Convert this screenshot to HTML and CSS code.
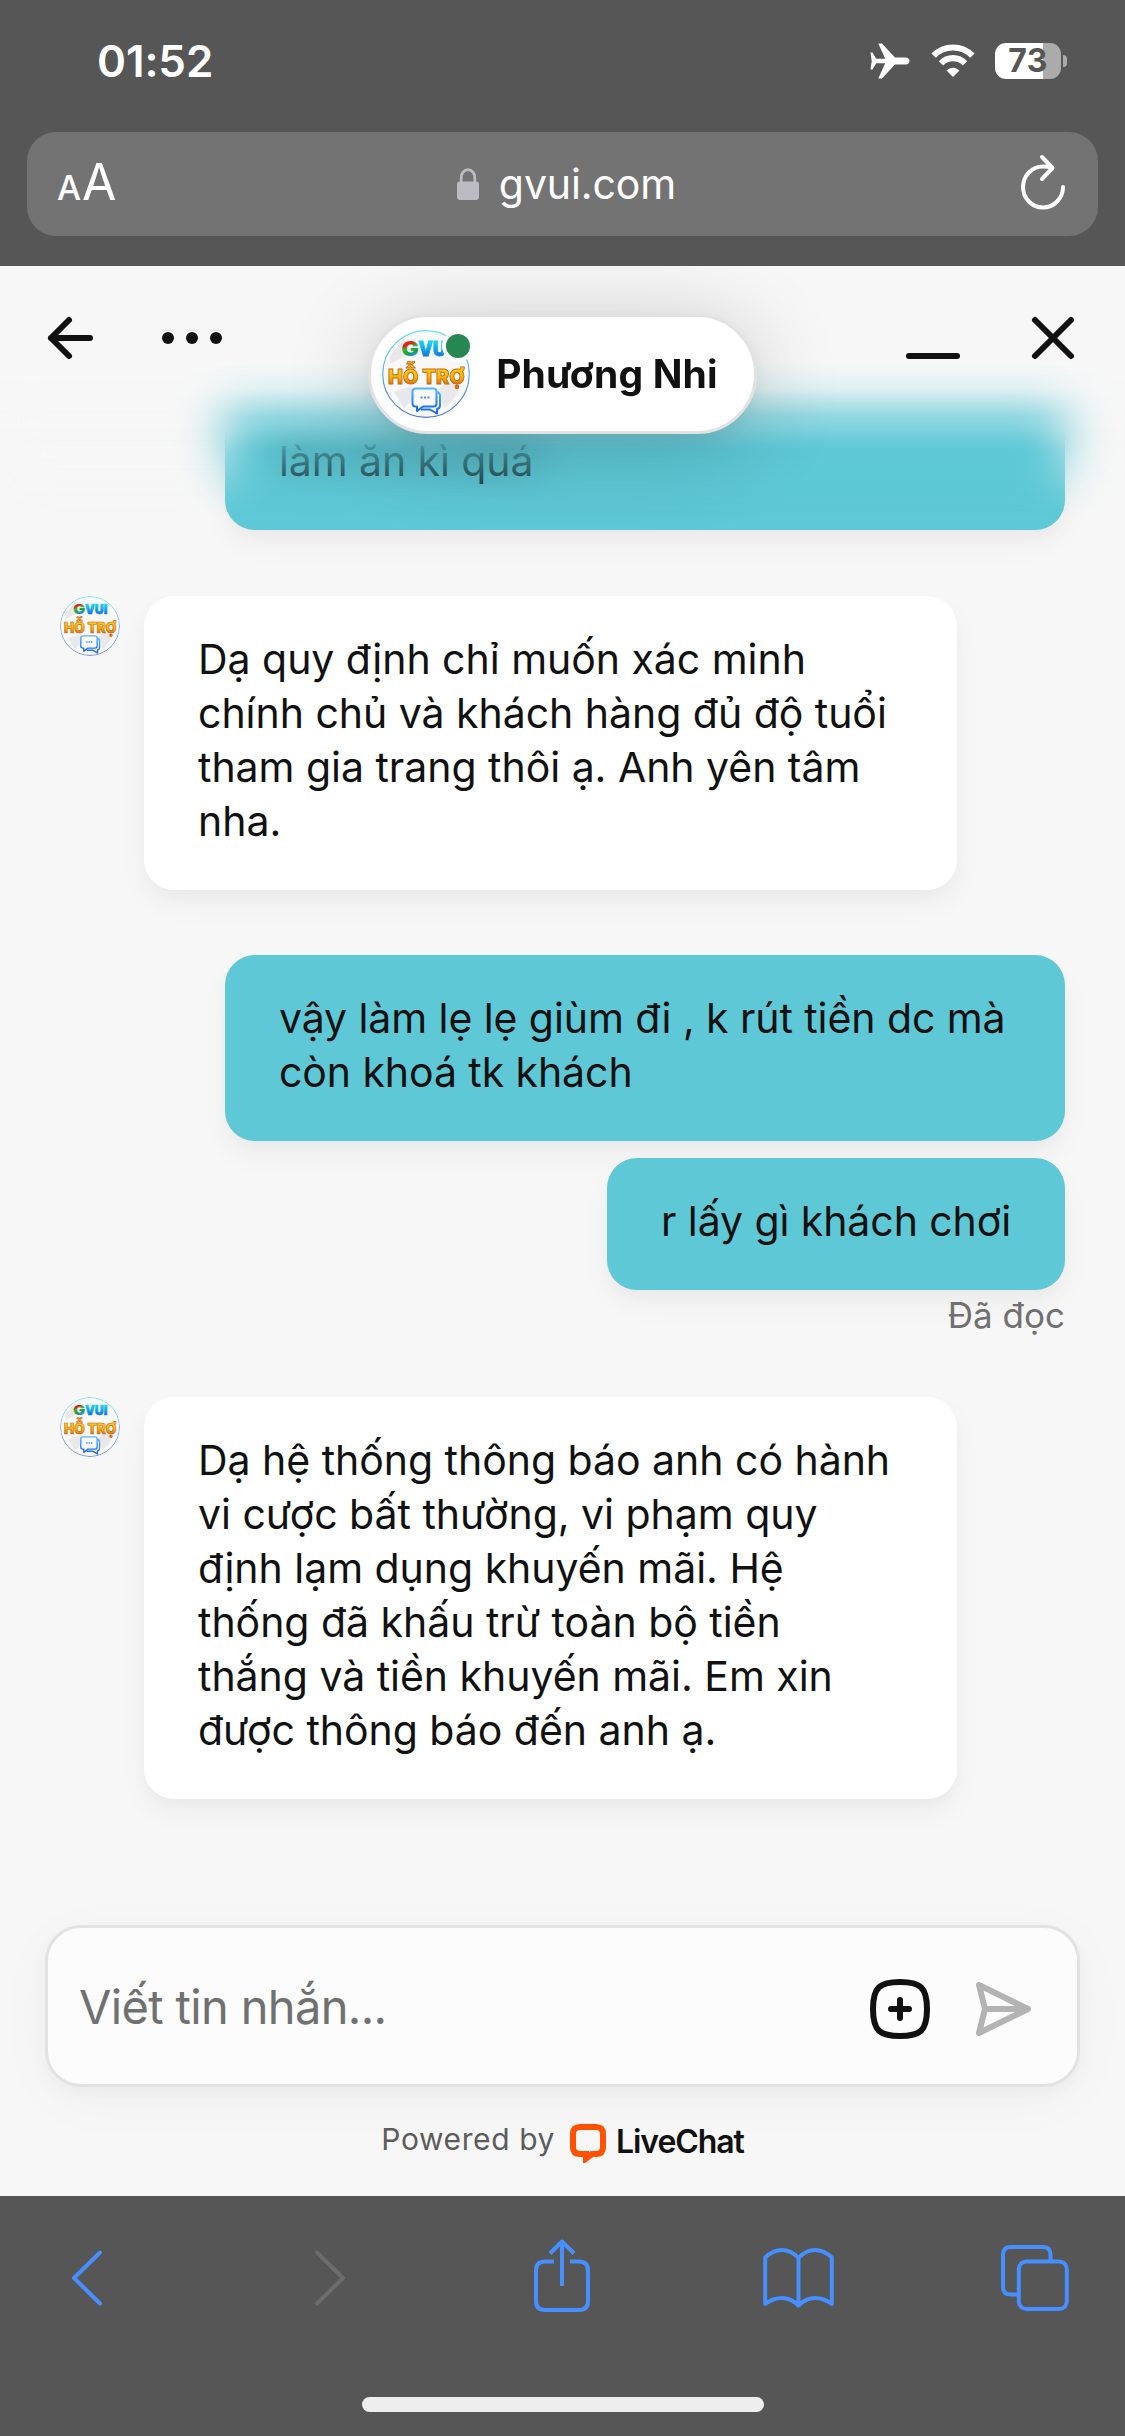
FILE: index.html
```html
<!DOCTYPE html>
<html lang="vi">
<head>
<meta charset="utf-8">
<title>gvui.com</title>
<link rel="stylesheet" href="styles.css">
</head>
<body>
<svg class="defs" width="0" height="0" aria-hidden="true">
  <defs>
    <linearGradient id="gold" x1="0" y1="0" x2="0" y2="1"><stop offset="0.2" stop-color="#ffd21c"/><stop offset="0.6" stop-color="#f8b406"/><stop offset="0.85" stop-color="#d9720c"/></linearGradient>
    <linearGradient id="sky" x1="0" y1="0" x2="0" y2="1"><stop offset="0.2" stop-color="#15d3f6"/><stop offset="0.85" stop-color="#1272dc"/></linearGradient>
    <linearGradient id="multi" x1="0" y1="0" x2="0.3" y2="1"><stop offset="0.4" stop-color="#e02418"/><stop offset="0.52" stop-color="#2fb82c"/><stop offset="0.75" stop-color="#16a03c"/><stop offset="0.85" stop-color="#1d8fe0"/></linearGradient>
    <linearGradient id="ring" x1="0" y1="0" x2="0" y2="1"><stop offset="0" stop-color="#62e6f5"/><stop offset="1" stop-color="#5675c9"/></linearGradient>
    <linearGradient id="chat" x1="0" y1="0" x2="0" y2="1"><stop offset="0" stop-color="#55b5ff"/><stop offset="1" stop-color="#1463f0"/></linearGradient>
    <symbol id="avatar" viewBox="0 0 88 88">
      <circle cx="44" cy="44" r="43.3" fill="#f8f8f9" stroke="url(#ring)" stroke-width="1.2"/>
      <path d="M8 26 22 8q8 6 3 17L8 34ZM12 62 28 56l6 10-12 12ZM56 60q8-10 22-6-4 16-16 24Z" fill="#e8e8ea"/>
      <text x="19.5" y="26" class="logo-top" fill="url(#multi)" textLength="17.5" lengthAdjust="spacingAndGlyphs">G</text>
      <text x="36.5" y="26" class="logo-top" fill="url(#sky)" stroke="url(#sky)" stroke-width="0.8" textLength="33" lengthAdjust="spacingAndGlyphs">VUI</text>
      <text x="6" y="53.6" class="logo-main" fill="url(#gold)" stroke="#c4661a" stroke-width="0.9" textLength="77" lengthAdjust="spacingAndGlyphs">HỖ TRỢ</text>
      <g fill="none" stroke="url(#chat)" stroke-width="2" stroke-linejoin="round">
        <path d="M33.500 58.500h18q3 0 3 3v12q0 3-3 3H41l-6 4.500v-4.500h-1.500q-3 0-3-3v-12q0-3 3-3Z"/>
        <path d="M54.500 62q3.500.500 3.500 4v9q0 3.500-3 4v4.500L48 79.500h-9"/>
      </g>
      <path d="M38.500 67.500h2M42 67.500h2M45.500 67.500h2" stroke="#4c8df5" stroke-width="2"/>
    </symbol>
  </defs>
</svg>

<div class="phone">
  <header class="browser">
    <div class="status">
      <span class="clock">01:52</span>
      <div class="indicators">
        <svg class="plane" width="40" height="36" viewBox="0 0 40 36" fill="#fff"><path d="M0.500 9.500h2L6.200 15.800h9L8.300 0.500h3.600L25 14.400h10.500c5.400 0 5.400 7.200 0 7.200H25L11.900 35.500H8.300l6.900-15.300h-9L2.500 26.500h-2l1.200-8.500Z"/></svg>
        <svg class="wifi" width="44" height="34" viewBox="0 0 44 34"><g fill="none" stroke="#fff" stroke-width="6.200"><path d="M2.600 11.700a27 27 0 0 1 38.800 0"/><path d="M10 19.300a16.700 16.700 0 0 1 24 0"/></g><path d="M22 33l-6.500-6.600a9.200 9.200 0 0 1 13 0Z" fill="#fff"/></svg>
        <div class="battery"><span class="level">73</span></div>
        <span class="nub"></span>
      </div>
    </div>
    <div class="address">
      <div class="reader"><span class="small-a">A</span><span class="big-a">A</span></div>
      <div class="site">
        <svg width="22" height="32" viewBox="0 0 22 32"><path d="M4.200 15V9.500a6.800 7.800 0 0 1 13.600 0V15" fill="none" stroke="#bcbbc2" stroke-width="2.800"/><rect y="13.500" width="22" height="18.500" rx="3" fill="#bcbbc2"/></svg>
        <span>gvui.com</span>
      </div>
      <svg class="reload" width="48" height="56" viewBox="0 0 48 56" fill="none" stroke="#fff" stroke-width="4" stroke-linecap="round" stroke-linejoin="round"><path d="M44 33a20 20.500 0 1 1-20-20.500q5 0 9 1"/><path d="M23 3l10.500 11L23 25"/></svg>
    </div>
  </header>

  <main class="chat">
    <section class="thread">
      <div class="bubble mine first">làm ăn kì quá</div>
      <div class="agent-row">
        <svg class="avatar" width="60" height="60"><use href="#avatar"/></svg>
        <div class="bubble agent">Dạ quy định chỉ muốn xác minh<br>chính chủ và khách hàng đủ độ tuổi<br>tham gia trang thôi ạ. Anh yên tâm<br>nha.</div>
      </div>
      <div class="mine-group">
        <div class="bubble mine wide">vậy làm lẹ lẹ giùm đi , k rút tiền dc mà<br>còn khoá tk khách</div>
        <div class="bubble mine">r lấy gì khách chơi</div>
        <span class="seen">Đã đọc</span>
      </div>
      <div class="agent-row">
        <svg class="avatar" width="60" height="60"><use href="#avatar"/></svg>
        <div class="bubble agent">Dạ hệ thống thông báo anh có hành<br>vi cược bất thường, vi phạm quy<br>định lạm dụng khuyến mãi. Hệ<br>thống đã khấu trừ toàn bộ tiền<br>thắng và tiền khuyến mãi. Em xin<br>được thông báo đến anh ạ.</div>
      </div>
    </section>

    <footer class="foot">
      <div class="composer">
        <span class="placeholder">Viết tin nhắn...</span>
        <svg class="attach" width="60" height="60" viewBox="0 0 60 60" fill="none" stroke="#111" stroke-width="6" stroke-linecap="round"><path d="M30 3c20 0 27 5 27 27s-7 27-27 27S3 52 3 30 10 3 30 3Z"/><path d="M30 21v18M21 30h18"/></svg>
        <svg class="send" width="60" height="60" viewBox="0 0 60 60" fill="none" stroke="#b3b3b3" stroke-width="6" stroke-linecap="round" stroke-linejoin="round"><path d="M5 6l49 24L5 54l6-24ZM11 30h42"/></svg>
      </div>
      <div class="powered">
        <span class="by">Powered by</span>
        <svg width="36" height="39" viewBox="0 0 36 39"><path d="M10 3h16q7 0 7 7v13q0 7-7 7h-4l-6 4.500V30h-6q-7 0-7-7V10q0-7 7-7Z" fill="none" stroke="#ff5100" stroke-width="6"/></svg>
        <span class="brand">LiveChat</span>
      </div>
    </footer>

    <div class="veil"></div>
    <div class="chat-header">
      <div class="side">
        <svg width="48" height="48" viewBox="0 0 48 48" fill="none" stroke="#111" stroke-width="6" stroke-linecap="round" stroke-linejoin="round"><path d="M45 24H6M24 6L6 24l18 18"/></svg>
        <svg class="dots" width="60" height="48" viewBox="0 0 60 48" fill="#111"><circle cx="6" cy="24" r="6"/><circle cx="30" cy="24" r="6"/><circle cx="54" cy="24" r="6"/></svg>
      </div>
      <div class="person">
        <div class="portrait">
          <svg width="88" height="88"><use href="#avatar"/></svg>
          <span class="online"></span>
        </div>
        <span class="name">Phương Nhi</span>
      </div>
      <div class="side right">
        <svg width="60" height="48" viewBox="0 0 60 48" fill="none" stroke="#111" stroke-width="6" stroke-linecap="round"><path d="M6 42h48"/></svg>
        <svg class="close" width="48" height="48" viewBox="0 0 48 48" fill="none" stroke="#111" stroke-width="6" stroke-linecap="round"><path d="M6 6l36 36M42 6L6 42"/></svg>
      </div>
    </div>
  </main>

  <nav class="toolbar">
    <div class="tools">
      <svg class="back" width="31" height="56" viewBox="0 0 31 56"><path d="M29 2.500L3 28l26 25.500"/></svg>
      <svg class="forward" width="31" height="56" viewBox="0 0 31 56"><path d="M2 2.500L28 28 2 53.500"/></svg>
      <svg class="share" width="58" height="74" viewBox="0 0 58 74"><path d="M21 22.500h-9q-9 0-9 9V62q0 9 9 9h34q9 0 9-9V31.500q0-9-9-9h-9"/><path d="M29 47V3M17 14.500L29 2.500l12 12"/></svg>
      <svg class="book" width="71" height="60" viewBox="0 0 71 60"><path d="M35.500 10Q28 2 19 2T2.200 9.500V56Q10 50 19 50t16.500 7.500ZM35.500 10Q43 2 52 2t16.800 7.500V56Q61 50 52 50t-16.500 7.500"/></svg>
      <svg class="tabs" width="68" height="66" viewBox="0 0 68 66"><path d="M49.500 15V9.500q0-7.500-7.500-7.500H9.500Q2 2 2 9.500V42q0 7.500 7.500 7.500H17"/><rect x="17.800" y="16.500" width="48" height="47.500" rx="7.500"/></svg>
    </div>
    <div class="home"></div>
  </nav>
</div>
</body>
</html>
```
FILE: styles.css
```css
* { box-sizing: border-box; }
body { margin: 0; font-family: Inter, "Liberation Sans", sans-serif; color: #111; }
svg { display: block; flex: none; }
.defs { position: absolute; }
.phone { width: 1125px; height: 2436px; display: flex; flex-direction: column; background: #565656; overflow: hidden; }

/* Browser chrome */
.browser { height: 266px; padding: 0 27px; color: #fff; }
.status { height: 122px; display: flex; align-items: center; justify-content: space-between; padding: 0 31px 0 70px; }
.clock { font-size: 44px; font-weight: 600; letter-spacing: -0.1px; }
.indicators { display: flex; align-items: center; }
.wifi { margin: 0 20px 0 21px; }
.battery { width: 66px; height: 36px; border-radius: 11px; background: linear-gradient(90deg, #fff 48px, #ababab 48px); display: flex; align-items: center; justify-content: center; }
.level { font-size: 32px; font-weight: 700; line-height: 36px; color: #565656; letter-spacing: 0.5px; }
.nub { width: 4px; height: 12px; margin-left: 2px; border-radius: 0 4px 4px 0; background: #ababab; }
.address { height: 104px; margin-top: 10px; padding: 0 31px 0 30px; border-radius: 29px; background: #737373; display: grid; grid-template-columns: 1fr auto 1fr; align-items: center; }
.reader { display: flex; align-items: baseline; gap: 1px; line-height: 60px; padding-top: 2px; }
.small-a { font-size: 34px; font-weight: 500; }
.big-a { font-size: 50px; }
.site { display: flex; align-items: center; gap: 20px; font-size: 41px; letter-spacing: -0.1px; margin-left: 9px; }
.site span { margin-top: -1px; }
.reload { justify-self: end; margin-top: -4px; }

/* Chat window */
.chat { position: relative; height: 1930px; background: #f7f7f7; display: flex; flex-direction: column; overflow: hidden; }
.thread { padding: 78px 60px 0; display: flex; flex-direction: column; gap: 65px; }
.bubble { padding: 36px 54px 42px; border-radius: 30px; font-size: 41px; line-height: 54px; letter-spacing: -0.08px; white-space: nowrap; box-shadow: 0 6px 12px rgba(0, 0, 0, 0.02), 0 14px 28px rgba(0, 0, 0, 0.045); }
.mine { background: #5ec8d6; align-self: flex-end; }
.wide { width: 840px; }
.first { width: 840px; padding-top: 90px; margin-bottom: 1px; }
.agent { background: #fff; width: 813px; letter-spacing: -0.03px; }
.agent-row { display: flex; align-items: flex-start; gap: 24px; }
.avatar { border-radius: 50%; }
.mine-group { display: flex; flex-direction: column; align-items: flex-end; gap: 17px; height: 377px; }
.seen { margin-top: -13px; font-size: 35px; line-height: 42px; color: #707070; }
.logo-top { font: 900 20px Inter, sans-serif; }
.logo-main { font: 900 20.500px Inter, sans-serif; }

.foot { margin-top: auto; padding: 0 45px 25px; }
.composer { height: 162px; padding: 0 43px 0 31px; border: 3px solid #e2e2e2; border-radius: 36px; background: #fcfcfc; display: flex; align-items: center; box-shadow: 0 6px 18px rgba(0, 0, 0, 0.035), 0 12px 60px rgba(0, 0, 0, 0.03); }
.placeholder { flex: 1; font-size: 47px; letter-spacing: -0.65px; color: #707070; }
.attach { margin-top: 6px; }
.send { margin: 6px 0 0 44px; }
.powered { height: 60px; margin-top: 24px; display: flex; align-items: center; justify-content: center; }
.by { font-size: 30px; letter-spacing: 0.6px; color: #5c5c5c; margin-top: -4px; margin-right: 15px; }
.brand { font-size: 32px; font-weight: 600; letter-spacing: -1.100px; margin-left: 10px; }
.powered svg { margin-top: 5px; }

/* Frosted header lying over the scrolled thread */
.veil { position: absolute; inset: 0 0 auto; height: 250px; background: linear-gradient(#f7f7f7 95px, rgba(247, 247, 247, 0.850) 122px, rgba(247, 247, 247, 0.350) 150px, rgba(247, 247, 247, 0) 185px); backdrop-filter: blur(24px); -webkit-mask-image: linear-gradient(#000 165px, transparent 250px); mask-image: linear-gradient(#000 165px, transparent 250px); }
.chat-header { position: absolute; inset: 0 0 auto; padding: 48px 45px 0; display: grid; grid-template-columns: 1fr auto 1fr; align-items: start; }
.side { display: flex; }
.right { justify-content: flex-end; }
.dots { margin-left: 69px; }
.close { margin: 0 3px 0 66px; }
.person { height: 120px; padding: 0 36px 0 11px; border: 3px solid #e2e2e2; border-radius: 60px; background: #fff; display: flex; align-items: center; gap: 26px; box-shadow: 0 6px 18px rgba(0, 0, 0, 0.06), 0 12px 90px rgba(0, 0, 0, 0.2); }
.portrait { position: relative; }
.online { position: absolute; left: 60px; top: 0; width: 32px; height: 32px; border: 4px solid #fff; border-radius: 50%; background: #268750; }
.name { font-size: 39px; font-weight: 700; letter-spacing: 0.2px; margin-top: -2px; }

/* Browser toolbar */
.toolbar { height: 240px; display: flex; flex-direction: column; align-items: center; }
.tools { width: 100%; height: 201px; padding: 0 56px 37px 71px; display: flex; align-items: center; }
.tools svg { fill: none; stroke: #458fff; stroke-width: 4; stroke-linecap: round; stroke-linejoin: round; }
.tools .forward { margin-left: 213px; stroke: #6c6c6c; }
.tools .share { margin: -4px 0 0 187px; stroke-linecap: butt; }
.book { margin-left: 172px; }
.tabs { margin-left: 167px; }
.home { width: 402px; height: 15px; border-radius: 8px; background: #eee; }
```
